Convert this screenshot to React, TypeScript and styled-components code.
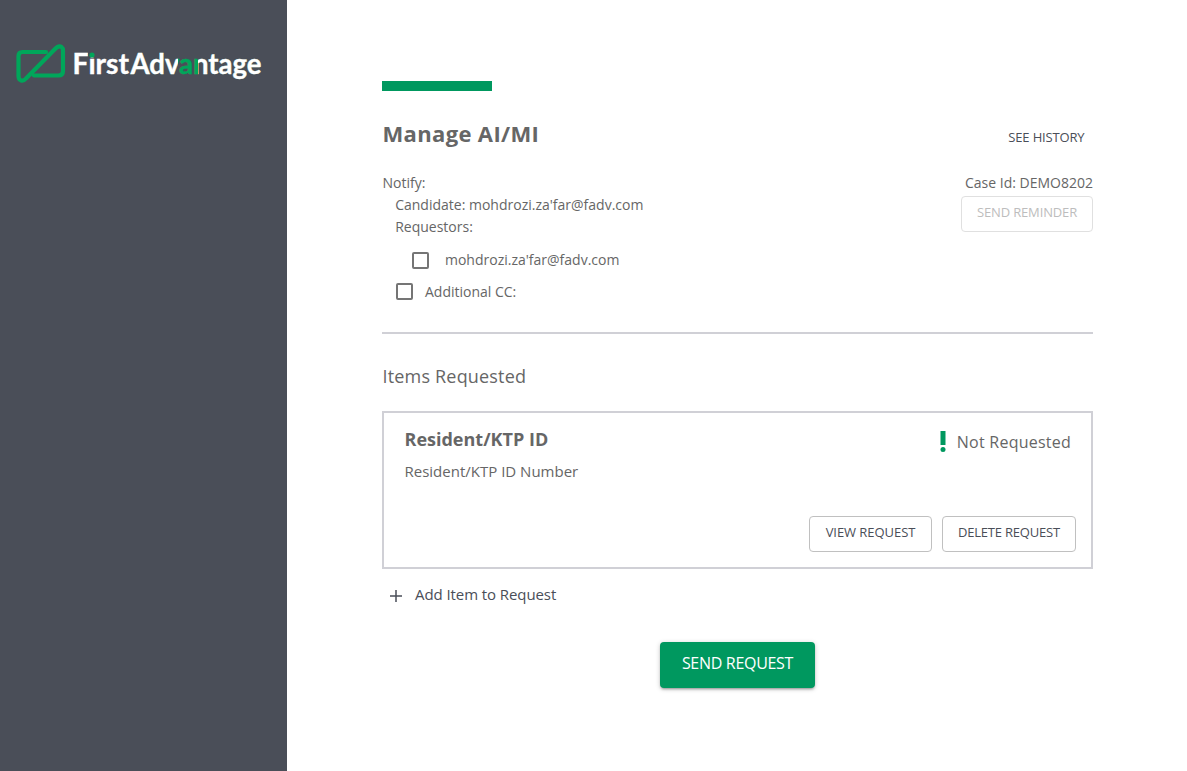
import React from "react";
import styled, { createGlobalStyle } from "styled-components";

const GlobalStyle = createGlobalStyle`
  * { box-sizing: border-box; }
  body { margin: 0; background: #fff; color: #666; font: 14px/22px "Open Sans", "Noto Sans", sans-serif; }
  h1, h2, h3, p { margin: 0; }
  button { font-family: inherit; cursor: pointer; }
`;

const Page = styled.div`
  display: flex;
  height: 771px;
  overflow: hidden;
`;

const Sidebar = styled.aside`
  flex: 0 0 287px;
  background: #4a4e58;
  padding: 38px 0 0 14px;
  svg { overflow: visible; }
`;

const Main = styled.main`
  width: 711px;
  margin-left: 95px;
  padding-top: 81px;
`;

const Accent = styled.div`
  width: 110px;
  height: 10px;
  background: #00985f;
`;

const Header = styled.header`
  display: flex;
  justify-content: space-between;
  height: 81px;
  padding: 26px 8.5px 0 0.5px;
`;

const Title = styled.h1`
  font-size: 22px;
  line-height: 32px;
  font-weight: 700;
  letter-spacing: 0.35px;
`;

const HistoryLink = styled.button`
  align-self: flex-start;
  margin-top: 9px;
  padding: 0;
  border: 0;
  background: none;
  color: #4a4e58;
  font-size: 13px;
  line-height: 22px;
  letter-spacing: -0.15px;
`;

const Details = styled.section`
  display: flex;
  justify-content: space-between;
  height: 162px;
  border-bottom: 2px solid #d0d0d6;
`;

const Notify = styled.div`
  padding-left: 0.5px;
`;

const Recipients = styled.div`
  padding-left: 12.7px;
`;

const CheckRow = styled.label<{ $indent: number; $gap: number; $top: number }>`
  display: flex;
  align-items: center;
  gap: ${(p) => p.$gap}px;
  margin: ${(p) => p.$top}px 0 0 ${(p) => p.$indent}px;
`;

const Box = styled.span<{ $drop?: number }>`
  width: 17.5px;
  height: 17.5px;
  margin-top: ${(p) => p.$drop ?? 0}px;
  border: 2px solid #757575;
  border-radius: 2px;
`;

const CaseInfo = styled.div`
  display: flex;
  flex-direction: column;
  align-items: flex-end;
  gap: 2px;
`;

const OutlineButton = styled.button<{ $width: number; $tracking?: number }>`
  width: ${(p) => p.$width}px;
  height: 36px;
  padding: 0 0 4px;
  border: 1px solid #c0c0c0;
  border-radius: 4px;
  background: #fff;
  color: #4a4e58;
  font-size: 13px;
  letter-spacing: ${(p) => p.$tracking ?? -0.15}px;
  white-space: nowrap;
  &:disabled { border-color: #e0e0e0; color: #bdbdbd; }
`;

const SectionTitle = styled.h2`
  margin: 28px 0 21px 0.5px;
  font-size: 18px;
  line-height: 28px;
  font-weight: 400;
  letter-spacing: 0.18px;
`;

const Card = styled.article`
  display: flex;
  flex-direction: column;
  justify-content: space-between;
  height: 158px;
  padding: 14px 15px 15px 20.5px;
  border: 2px solid #d0d0d6;
`;

const CardTop = styled.div`
  display: flex;
  justify-content: space-between;
`;

const ItemName = styled.h3`
  font-size: 18px;
  line-height: 24px;
`;

const ItemDetail = styled.p`
  margin-top: 8px;
  font-size: 15px;
  line-height: 24px;
`;

const Status = styled.div`
  display: flex;
  align-items: flex-start;
  gap: 11px;
  padding: 3px 5px 0 0;
  font-size: 16px;
  line-height: 24px;
  letter-spacing: 0.24px;
`;

const Actions = styled.div`
  display: flex;
  justify-content: flex-end;
  gap: 10px;
`;

const AddItem = styled.button`
  display: flex;
  align-items: center;
  gap: 13px;
  margin: 13px 0 0 8px;
  padding: 0;
  border: 0;
  background: none;
  color: #4a4e58;
  font-size: 15px;
  line-height: 24px;
  letter-spacing: -0.08px;
  svg { margin-top: 3px; }
`;

const SendButton = styled.button`
  display: block;
  width: 155px;
  height: 46px;
  margin: 36px 0 0 278px;
  padding: 0 0 4px;
  border: 0;
  border-radius: 4px;
  background: #00985f;
  box-shadow: 0 1px 5px rgba(0, 0, 0, 0.2), 0 2px 2px rgba(0, 0, 0, 0.14), 0 3px 1px -2px rgba(0, 0, 0, 0.12);
  color: #fff;
  font-size: 16px;
  font-weight: 500;
  letter-spacing: -0.3px;
`;

const Logo = () => (
  <svg width="252" height="50" viewBox="14 38 252 50" fill="none" role="img" aria-label="FirstAdvantage">
    <defs>
      <linearGradient id="word" gradientUnits="userSpaceOnUse" x1="131" x2="261" y1="0" y2="0">
        <stop offset="0.362" stopColor="#fff" />
        <stop offset="0.362" stopColor="#00a65a" />
        <stop offset="0.512" stopColor="#00a65a" />
        <stop offset="0.512" stopColor="#fff" />
      </linearGradient>
    </defs>
    <path d="M46 52H22.5Q18.500 52 18.500 56V76C18.500 81 23 82 26 78.500L54 50Q58.500 45 61.500 47Q63 48 63 51V71Q63 75.500 58.500 75.500H34" stroke="#00a65a" strokeWidth="4.200" strokeLinecap="round" strokeLinejoin="round" />
    <g fontFamily="Lato, sans-serif" fontSize="29" fontWeight="700" fill="#fff" stroke="#fff" strokeWidth="0.400">
      <text x="72.500" y="74" textLength="56.500" lengthAdjust="spacingAndGlyphs">First</text>
      <text x="130.500" y="74" textLength="131" lengthAdjust="spacingAndGlyphs" fill="url(#word)" stroke="url(#word)">Advantage</text>
    </g>
    <path d="M88 50h8v7.200h-8z" fill="#4a4e58" />
    <circle cx="92" cy="55" r="2.600" fill="#00a65a" />
  </svg>
);

export default function App() {
  return (
    <Page>
      <GlobalStyle />
      <Sidebar><Logo /></Sidebar>
      <Main>
        <Accent />
        <Header>
          <Title>Manage AI/MI</Title>
          <HistoryLink>SEE HISTORY</HistoryLink>
        </Header>
        <Details>
          <Notify>
            <p>Notify:</p>
            <Recipients>
              <p>Candidate: mohdrozi.za'far@fadv.com</p>
              <p>Requestors:</p>
              <CheckRow $indent={16.8} $gap={15.5} $top={11}><Box $drop={1} />mohdrozi.za'far@fadv.com</CheckRow>
              <CheckRow $indent={0.8} $gap={11.5} $top={10}><Box $drop={-1} />Additional CC:</CheckRow>
            </Recipients>
          </Notify>
          <CaseInfo>
            <p>Case Id: DEMO8202</p>
            <OutlineButton $width={132} disabled>SEND REMINDER</OutlineButton>
          </CaseInfo>
        </Details>
        <SectionTitle>Items Requested</SectionTitle>
        <Card>
          <CardTop>
            <div>
              <ItemName>Resident/KTP ID</ItemName>
              <ItemDetail>Resident/KTP ID Number</ItemDetail>
            </div>
            <Status>
              <svg width="6" height="22" fill="#00985f"><path d="M.5 1h5v14h-5z" /><circle cx="3" cy="19.500" r="2.500" /></svg>
              Not Requested
            </Status>
          </CardTop>
          <Actions>
            <OutlineButton $width={123} $tracking={-0.05}>VIEW REQUEST</OutlineButton>
            <OutlineButton $width={134} $tracking={-0.2}>DELETE REQUEST</OutlineButton>
          </Actions>
        </Card>
        <AddItem>
          <svg width="12" height="12" stroke="#4a4e58" strokeWidth="1.500"><path d="M6 0v12M0 6h12" /></svg>
          Add Item to Request
        </AddItem>
        <SendButton>SEND REQUEST</SendButton>
      </Main>
    </Page>
  );
}
